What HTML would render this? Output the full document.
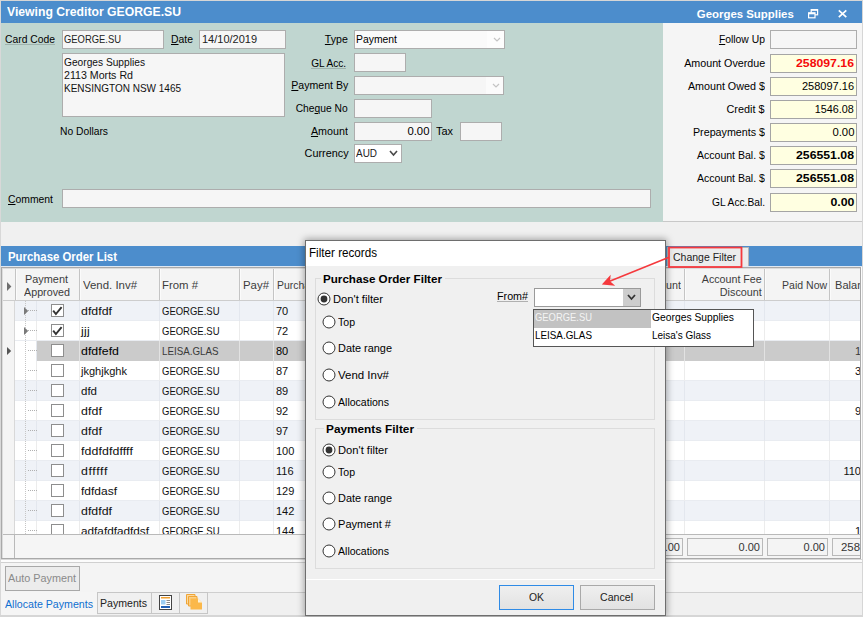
<!DOCTYPE html>
<html><head><meta charset="utf-8"><title>Viewing Creditor GEORGE.SU</title>
<style>
html,body{margin:0;padding:0;}
html{width:863px;height:617px;overflow:hidden;}
body{width:863px;height:617px;position:relative;overflow:hidden;background:#f0f0f0;font-family:"Liberation Sans", sans-serif;font-size:11px;}
div,span.t,svg{position:absolute;box-sizing:border-box;}
span.t{white-space:nowrap;}
u{text-decoration:underline;text-underline-offset:1px;}

.inp{background:#f6f6f6;border:1px solid #adadad;}
.yel{background:#ffffe1;border:1px solid #a5a5a5;}
.hc{background:#f3f3f3;border-right:1px solid #c3c3c3;}

</style></head><body>
<div style="left:0px;top:0px;width:863px;height:617px;background:#f0f0f0;"></div>
<div style="left:0px;top:0px;width:863px;height:1px;background:#d6d6d6;"></div>
<div style="left:0px;top:0px;width:1px;height:617px;background:#d8d8d8;"></div>
<div style="left:862px;top:0px;width:1px;height:617px;background:#d6d6d6;"></div>
<div style="left:1px;top:1px;width:861px;height:22px;background:#4c8dcc;"></div>
<span class="t" style="top:5.34px;font-size:12px;line-height:15px;color:#fff;font-weight:bold;left:7px;transform:scaleX(1.0167);transform-origin:0 50%;">Viewing Creditor GEORGE.SU</span>
<span class="t" style="top:6.77px;font-size:11.5px;line-height:14.5px;color:#fff;font-weight:bold;right:69.00px;transform:scaleX(0.9920);transform-origin:100% 50%;">Georges Supplies</span>
<svg style="left:807px;top:8px" width="12" height="12" viewBox="0 0 12 12"><rect x="4.2" y="1.6" width="6.4" height="5.2" fill="none" stroke="#fff" stroke-width="1.2"/><rect x="1.6" y="4.8" width="6.4" height="5" fill="#4c8dcc" stroke="#fff" stroke-width="1.2"/><rect x="1.6" y="4.8" width="6.4" height="1.5" fill="#fff"/><rect x="4.2" y="1.6" width="6.4" height="1.2" fill="#fff"/></svg>
<svg style="left:837px;top:9px" width="11" height="10" viewBox="0 0 11 10"><path d="M1.8 1.4 L9.3 8.2 M9.3 1.4 L1.8 8.2" stroke="#fff" stroke-width="1.7" fill="none"/></svg>
<div style="left:1px;top:23px;width:662px;height:199px;background:#c0d6d0;"></div>
<div style="left:663px;top:23px;width:199px;height:199px;background:#f5f5f5;"></div>
<div style="left:663px;top:221px;width:199px;height:1px;background:#c8c8c8;"></div>
<span class="t" style="top:32.19px;font-size:11px;line-height:14px;color:#000;left:5px;transform:scaleX(0.9398);transform-origin:0 50%;">Card Code</span>
<div style="left:5px;top:44px;width:50px;height:1px;background:#9fb2ad;"></div>
<div class="inp" style="left:62px;top:30px;width:102px;height:19px;"></div>
<span class="t" style="top:32.19px;font-size:11px;line-height:14px;color:#222;left:64px;transform:scaleX(0.8555);transform-origin:0 50%;">GEORGE.SU</span>
<span class="t" style="top:32.19px;font-size:11px;line-height:14px;color:#000;left:171px;transform:scaleX(0.9462);transform-origin:0 50%;"><u>D</u>ate</span>
<div class="inp" style="left:199px;top:30px;width:87px;height:19px;"></div>
<span class="t" style="top:32.19px;font-size:11px;line-height:14px;color:#222;left:202px;transform:scaleX(0.9989);transform-origin:0 50%;">14/10/2019</span>
<div class="inp" style="left:62px;top:53px;width:223px;height:64px;"></div>
<span class="t" style="top:55.19px;font-size:11px;line-height:14px;color:#111;left:64px;transform:scaleX(0.9262);transform-origin:0 50%;">Georges Supplies</span>
<span class="t" style="top:68.19px;font-size:11px;line-height:14px;color:#111;left:64px;transform:scaleX(0.9674);transform-origin:0 50%;">2113 Morts Rd</span>
<span class="t" style="top:81.19px;font-size:11px;line-height:14px;color:#111;left:64px;transform:scaleX(0.9085);transform-origin:0 50%;">KENSINGTON NSW 1465</span>
<span class="t" style="top:124.19px;font-size:11px;line-height:14px;color:#000;left:60px;transform:scaleX(0.9346);transform-origin:0 50%;">No Dollars</span>
<span class="t" style="top:192.19px;font-size:11px;line-height:14px;color:#000;left:8px;transform:scaleX(0.9433);transform-origin:0 50%;"><u>C</u>omment</span>
<div class="inp" style="left:62px;top:189px;width:589px;height:19px;"></div>
<span class="t" style="top:32.19px;font-size:11px;line-height:14px;color:#000;right:515.00px;transform:scaleX(0.9634);transform-origin:100% 50%;"><u>T</u>ype</span>
<div style="left:354px;top:30px;width:151px;height:19px;background:#fafafa;border:1px solid #adadad;"></div>
<div style="left:487px;top:31px;width:17px;height:17px;background:#fdfdfd;"></div>
<span class="t" style="top:32.19px;font-size:11px;line-height:14px;color:#000;left:355.5px;transform:scaleX(0.9442);transform-origin:0 50%;">Payment</span>
<span class="t" style="top:56.19px;font-size:11px;line-height:14px;color:#000;right:517.00px;transform:scaleX(0.9180);transform-origin:100% 50%;"><u>G</u>L Acc.</span>
<div style="left:311px;top:68px;width:35px;height:1px;background:#9fb2ad;"></div>
<div class="inp" style="left:354px;top:53px;width:52px;height:19px;"></div>
<span class="t" style="top:78.19px;font-size:11px;line-height:14px;color:#000;right:515.00px;transform:scaleX(0.9610);transform-origin:100% 50%;"><u>P</u>ayment By</span>
<div class="inp" style="left:354px;top:76px;width:150px;height:19px;"></div>
<div style="left:486px;top:77px;width:17px;height:17px;background:#fbfbfb;"></div>
<span class="t" style="top:101.19px;font-size:11px;line-height:14px;color:#000;right:515.00px;transform:scaleX(0.9340);transform-origin:100% 50%;">Che<u>q</u>ue No</span>
<div class="inp" style="left:354px;top:99px;width:78px;height:19px;"></div>
<span class="t" style="top:124.19px;font-size:11px;line-height:14px;color:#000;right:515.00px;transform:scaleX(0.9757);transform-origin:100% 50%;"><u>A</u>mount</span>
<div class="inp" style="left:354px;top:122px;width:78px;height:19px;"></div>
<span class="t" style="top:124.19px;font-size:11px;line-height:14px;color:#000;right:434.00px;transform:scaleX(1.0270);transform-origin:100% 50%;">0.00</span>
<span class="t" style="top:124.19px;font-size:11px;line-height:14px;color:#000;left:436px;transform:scaleX(0.9927);transform-origin:0 50%;">Tax</span>
<div class="inp" style="left:460px;top:122px;width:42px;height:19px;"></div>
<span class="t" style="top:146.19px;font-size:11px;line-height:14px;color:#000;right:514.00px;transform:scaleX(0.9860);transform-origin:100% 50%;">Currency</span>
<div style="left:354px;top:144px;width:48px;height:19px;background:#fff;border:1px solid #adadad;"></div>
<span class="t" style="top:146.19px;font-size:11px;line-height:14px;color:#222;left:356px;transform:scaleX(0.9038);transform-origin:0 50%;">AUD</span>
<svg style="left:493px;top:37px" width="8" height="6" viewBox="0 0 8 6"><path d="M1 1 L4.0 4 L7 1" stroke="#c4c4c4" stroke-width="1.2" fill="none"/></svg>
<svg style="left:492px;top:83px" width="8" height="6" viewBox="0 0 8 6"><path d="M1 1 L4.0 4 L7 1" stroke="#c4c4c4" stroke-width="1.2" fill="none"/></svg>
<svg style="left:389px;top:150px" width="9" height="7" viewBox="0 0 9 7"><path d="M1 1 L4.5 5 L8 1" stroke="#4a4a4a" stroke-width="1.6" fill="none"/></svg>
<span class="t" style="top:32.19px;font-size:11px;line-height:14px;color:#000;right:98.00px;transform:scaleX(0.9403);transform-origin:100% 50%;"><u>F</u>ollow Up</span>
<div class="inp" style="left:770px;top:30px;width:87px;height:19px;"></div>
<span class="t" style="top:56.19px;font-size:11px;line-height:14px;color:#000;right:98.00px;transform:scaleX(0.9741);transform-origin:100% 50%;">Amount Overdue</span>
<div class="yel" style="left:770px;top:54px;width:87px;height:19px;"></div>
<span class="t" style="top:56.19px;font-size:11px;line-height:14px;color:#f50a0a;font-weight:bold;right:9.00px;transform:scaleX(1.1154);transform-origin:100% 50%;">258097.16</span>
<span class="t" style="top:79.19px;font-size:11px;line-height:14px;color:#000;right:98.00px;transform:scaleX(0.9762);transform-origin:100% 50%;">Amount Owed $</span>
<div class="yel" style="left:770px;top:77px;width:87px;height:19px;"></div>
<span class="t" style="top:79.19px;font-size:11px;line-height:14px;color:#000;right:9.00px;transform:scaleX(1.0000);transform-origin:100% 50%;">258097.16</span>
<span class="t" style="top:102.19px;font-size:11px;line-height:14px;color:#000;right:98.00px;transform:scaleX(0.9862);transform-origin:100% 50%;">Credit $</span>
<div class="yel" style="left:770px;top:100px;width:87px;height:19px;"></div>
<span class="t" style="top:102.19px;font-size:11px;line-height:14px;color:#000;right:9.00px;transform:scaleX(0.9807);transform-origin:100% 50%;">1546.08</span>
<span class="t" style="top:125.19px;font-size:11px;line-height:14px;color:#000;right:98.00px;transform:scaleX(0.9732);transform-origin:100% 50%;">Prepayments $</span>
<div class="yel" style="left:770px;top:123px;width:87px;height:19px;"></div>
<span class="t" style="top:125.19px;font-size:11px;line-height:14px;color:#000;right:9.00px;transform:scaleX(1.0270);transform-origin:100% 50%;">0.00</span>
<span class="t" style="top:148.19px;font-size:11px;line-height:14px;color:#000;right:98.00px;transform:scaleX(0.9586);transform-origin:100% 50%;">Account Bal. $</span>
<div class="yel" style="left:770px;top:146px;width:87px;height:19px;"></div>
<span class="t" style="top:148.19px;font-size:11px;line-height:14px;color:#000;font-weight:bold;right:9.00px;transform:scaleX(1.1154);transform-origin:100% 50%;">256551.08</span>
<span class="t" style="top:171.19px;font-size:11px;line-height:14px;color:#000;right:98.00px;transform:scaleX(0.9586);transform-origin:100% 50%;">Account Bal. $</span>
<div class="yel" style="left:770px;top:169px;width:87px;height:19px;"></div>
<span class="t" style="top:171.19px;font-size:11px;line-height:14px;color:#000;font-weight:bold;right:9.00px;transform:scaleX(1.1154);transform-origin:100% 50%;">256551.08</span>
<span class="t" style="top:195.19px;font-size:11px;line-height:14px;color:#000;right:98.00px;transform:scaleX(0.9288);transform-origin:100% 50%;">GL Acc.Bal.</span>
<div class="yel" style="left:770px;top:193px;width:87px;height:19px;"></div>
<span class="t" style="top:195.19px;font-size:11px;line-height:14px;color:#000;font-weight:bold;letter-spacing:0.002px;right:9.00px;transform:scaleX(1.1200);transform-origin:100% 50%;">0.00</span>
<div style="left:1px;top:246px;width:861px;height:20px;background:#4c8dcc;"></div>
<span class="t" style="top:250.34px;font-size:12px;line-height:15px;color:#fff;font-weight:bold;left:8px;transform:scaleX(0.9501);transform-origin:0 50%;">Purchase Order List</span>
<div style="left:667px;top:247px;width:82px;height:20px;background:#ececec;border:1px solid #b5b5b5;"></div>
<span class="t" style="top:250.19px;font-size:11px;line-height:14px;color:#222;left:673px;transform:scaleX(0.9539);transform-origin:0 50%;">Change Filter</span>
<div style="left:1px;top:266px;width:861px;height:1px;background:#dfe8f2;"></div>
<div style="left:1px;top:267px;width:861px;height:295px;background:#fcfcfc;"></div>
<div style="left:1px;top:267px;width:860px;height:292px;background:#a9a9a9;"></div>
<div style="left:2px;top:268px;width:858px;height:290px;background:#dcdcdc;"></div>
<div style="left:3px;top:269px;width:857px;height:289px;background:#fff;"></div>
<div style="left:1px;top:559px;width:861px;height:1px;background:#d8d8d8;"></div>
<div style="left:3px;top:269px;width:857px;height:31px;background:#f4f4f4;"></div>
<div style="left:3px;top:300px;width:857px;height:1px;background:#cdcdcd;"></div>
<div style="left:15px;top:269px;width:1px;height:31px;background:#c4c4c4;"></div>
<div style="left:16px;top:269px;width:1px;height:31px;background:#fbfbfb;"></div>
<div style="left:79px;top:269px;width:1px;height:31px;background:#c4c4c4;"></div>
<div style="left:80px;top:269px;width:1px;height:31px;background:#fbfbfb;"></div>
<div style="left:159px;top:269px;width:1px;height:31px;background:#c4c4c4;"></div>
<div style="left:160px;top:269px;width:1px;height:31px;background:#fbfbfb;"></div>
<div style="left:239px;top:269px;width:1px;height:31px;background:#c4c4c4;"></div>
<div style="left:240px;top:269px;width:1px;height:31px;background:#fbfbfb;"></div>
<div style="left:273px;top:269px;width:1px;height:31px;background:#c4c4c4;"></div>
<div style="left:274px;top:269px;width:1px;height:31px;background:#fbfbfb;"></div>
<div style="left:347px;top:269px;width:1px;height:31px;background:#c4c4c4;"></div>
<div style="left:348px;top:269px;width:1px;height:31px;background:#fbfbfb;"></div>
<div style="left:419px;top:269px;width:1px;height:31px;background:#c4c4c4;"></div>
<div style="left:420px;top:269px;width:1px;height:31px;background:#fbfbfb;"></div>
<div style="left:499px;top:269px;width:1px;height:31px;background:#c4c4c4;"></div>
<div style="left:500px;top:269px;width:1px;height:31px;background:#fbfbfb;"></div>
<div style="left:559px;top:269px;width:1px;height:31px;background:#c4c4c4;"></div>
<div style="left:560px;top:269px;width:1px;height:31px;background:#fbfbfb;"></div>
<div style="left:619px;top:269px;width:1px;height:31px;background:#c4c4c4;"></div>
<div style="left:620px;top:269px;width:1px;height:31px;background:#fbfbfb;"></div>
<div style="left:684px;top:269px;width:1px;height:31px;background:#c4c4c4;"></div>
<div style="left:685px;top:269px;width:1px;height:31px;background:#fbfbfb;"></div>
<div style="left:764px;top:269px;width:1px;height:31px;background:#c4c4c4;"></div>
<div style="left:765px;top:269px;width:1px;height:31px;background:#fbfbfb;"></div>
<div style="left:829px;top:269px;width:1px;height:31px;background:#c4c4c4;"></div>
<div style="left:830px;top:269px;width:1px;height:31px;background:#fbfbfb;"></div>
<span class="t" style="top:272.19px;font-size:11px;line-height:14px;color:#3c3c3c;left:25px;transform:scaleX(0.9903);transform-origin:0 50%;">Payment</span>
<span class="t" style="top:285.19px;font-size:11px;line-height:14px;color:#3c3c3c;left:24px;transform:scaleX(0.9768);transform-origin:0 50%;">Approved</span>
<span class="t" style="top:278.19px;font-size:11px;line-height:14px;color:#3c3c3c;left:83px;transform:scaleX(1.0385);transform-origin:0 50%;">Vend. Inv#</span>
<span class="t" style="top:278.19px;font-size:11px;line-height:14px;color:#3c3c3c;left:161.5px;transform:scaleX(1.0332);transform-origin:0 50%;">From #</span>
<span class="t" style="top:278.19px;font-size:11px;line-height:14px;color:#3c3c3c;left:242.5px;transform:scaleX(1.0368);transform-origin:0 50%;">Pay#</span>
<span class="t" style="top:278.19px;font-size:11px;line-height:14px;color:#3c3c3c;left:276.5px;transform:scaleX(0.9466);transform-origin:0 50%;">Purchase</span>
<span class="t" style="top:278.19px;font-size:11px;line-height:14px;color:#3c3c3c;right:182.00px;transform:scaleX(0.9757);transform-origin:100% 50%;">Amount</span>
<span class="t" style="top:272.19px;font-size:11px;line-height:14px;color:#3c3c3c;right:101.00px;transform:scaleX(0.9714);transform-origin:100% 50%;">Account Fee</span>
<span class="t" style="top:285.19px;font-size:11px;line-height:14px;color:#3c3c3c;right:101.00px;transform:scaleX(0.9814);transform-origin:100% 50%;">Discount</span>
<span class="t" style="top:278.19px;font-size:11px;line-height:14px;color:#3c3c3c;right:36.00px;transform:scaleX(0.9559);transform-origin:100% 50%;">Paid Now</span>
<div style="left:830px;top:269px;width:30px;height:31px;overflow:hidden">
<span class="t" style="top:9.19px;font-size:11px;line-height:14px;color:#3c3c3c;left:5px;transform:scaleX(1.0059);transform-origin:0 50%;">Balance</span>
</div>
<div style="left:3px;top:301px;width:857px;height:233px;overflow:hidden">
<div style="left:12px;top:0px;width:845px;height:20px;background:#eff2f7;"></div>
<div style="left:12px;top:19px;width:845px;height:1px;background:#e9ecf1;"></div>
<div style="left:76px;top:0px;width:1px;height:20px;background:#e3e7ee;"></div>
<div style="left:156px;top:0px;width:1px;height:20px;background:#e3e7ee;"></div>
<div style="left:236px;top:0px;width:1px;height:20px;background:#e3e7ee;"></div>
<div style="left:270px;top:0px;width:1px;height:20px;background:#e3e7ee;"></div>
<div style="left:344px;top:0px;width:1px;height:20px;background:#e3e7ee;"></div>
<div style="left:416px;top:0px;width:1px;height:20px;background:#e3e7ee;"></div>
<div style="left:496px;top:0px;width:1px;height:20px;background:#e3e7ee;"></div>
<div style="left:556px;top:0px;width:1px;height:20px;background:#e3e7ee;"></div>
<div style="left:616px;top:0px;width:1px;height:20px;background:#e3e7ee;"></div>
<div style="left:681px;top:0px;width:1px;height:20px;background:#e3e7ee;"></div>
<div style="left:761px;top:0px;width:1px;height:20px;background:#e3e7ee;"></div>
<div style="left:826px;top:0px;width:1px;height:20px;background:#e3e7ee;"></div>
<div style="left:33px;top:0px;width:1px;height:20px;background:#e3e7ee;"></div>
<div style="left:0px;top:0px;width:11px;height:20px;background:#f4f4f4;"></div>
<div style="left:11px;top:0px;width:1px;height:20px;background:#d8d8d8;"></div>
<div style="left:48px;top:3px;width:13px;height:13px;background:#fff;border:1px solid #8e8e8e;"></div>
<svg style="left:49px;top:4px" width="11" height="11" viewBox="0 0 11 11"><path d="M1.2 5.6 L3.9 9 L9.6 2.2" stroke="#333" stroke-width="1.9" fill="none"/></svg>
<div style="left:22px;top:0px;width:1px;height:20px;background:repeating-linear-gradient(to bottom,#c6c6c6 0 1px,transparent 1px 2px);"></div>
<div style="left:25px;top:9px;width:9px;height:1px;background:repeating-linear-gradient(to right,#b0b0b0 0 1px,transparent 1px 2px);"></div>
<svg style="left:21px;top:6px" width="5" height="8" viewBox="0 0 5 8"><path d="M0 0 L4.2 4 L0 8 Z" fill="#7a7a7a"/></svg>
<span class="t" style="top:3.19px;font-size:11px;line-height:14px;color:#111;letter-spacing:0.025px;left:78px;transform:scaleX(1.1200);transform-origin:0 50%;">dfdfdf</span>
<span class="t" style="top:3.19px;font-size:11px;line-height:14px;color:#111;left:158.5px;transform:scaleX(0.8630);transform-origin:0 50%;">GEORGE.SU</span>
<span class="t" style="top:3.19px;font-size:11px;line-height:14px;color:#111;left:273px;">70</span>
<div style="left:12px;top:20px;width:845px;height:20px;background:#fff;"></div>
<div style="left:12px;top:39px;width:845px;height:1px;background:#e9ecf1;"></div>
<div style="left:76px;top:20px;width:1px;height:20px;background:#ececec;"></div>
<div style="left:156px;top:20px;width:1px;height:20px;background:#ececec;"></div>
<div style="left:236px;top:20px;width:1px;height:20px;background:#ececec;"></div>
<div style="left:270px;top:20px;width:1px;height:20px;background:#ececec;"></div>
<div style="left:344px;top:20px;width:1px;height:20px;background:#ececec;"></div>
<div style="left:416px;top:20px;width:1px;height:20px;background:#ececec;"></div>
<div style="left:496px;top:20px;width:1px;height:20px;background:#ececec;"></div>
<div style="left:556px;top:20px;width:1px;height:20px;background:#ececec;"></div>
<div style="left:616px;top:20px;width:1px;height:20px;background:#ececec;"></div>
<div style="left:681px;top:20px;width:1px;height:20px;background:#ececec;"></div>
<div style="left:761px;top:20px;width:1px;height:20px;background:#ececec;"></div>
<div style="left:826px;top:20px;width:1px;height:20px;background:#ececec;"></div>
<div style="left:33px;top:20px;width:1px;height:20px;background:#ececec;"></div>
<div style="left:0px;top:20px;width:11px;height:20px;background:#f4f4f4;"></div>
<div style="left:11px;top:20px;width:1px;height:20px;background:#d8d8d8;"></div>
<div style="left:48px;top:23px;width:13px;height:13px;background:#fff;border:1px solid #8e8e8e;"></div>
<svg style="left:49px;top:24px" width="11" height="11" viewBox="0 0 11 11"><path d="M1.2 5.6 L3.9 9 L9.6 2.2" stroke="#333" stroke-width="1.9" fill="none"/></svg>
<div style="left:22px;top:20px;width:1px;height:20px;background:repeating-linear-gradient(to bottom,#c6c6c6 0 1px,transparent 1px 2px);"></div>
<div style="left:25px;top:29px;width:9px;height:1px;background:repeating-linear-gradient(to right,#b0b0b0 0 1px,transparent 1px 2px);"></div>
<svg style="left:21px;top:26px" width="5" height="8" viewBox="0 0 5 8"><path d="M0 0 L4.2 4 L0 8 Z" fill="#7a7a7a"/></svg>
<span class="t" style="top:23.19px;font-size:11px;line-height:14px;color:#111;letter-spacing:0.231px;left:78px;transform:scaleX(1.1200);transform-origin:0 50%;">jjj</span>
<span class="t" style="top:23.19px;font-size:11px;line-height:14px;color:#111;left:158.5px;transform:scaleX(0.8630);transform-origin:0 50%;">GEORGE.SU</span>
<span class="t" style="top:23.19px;font-size:11px;line-height:14px;color:#111;left:273px;">72</span>
<div style="left:12px;top:40px;width:845px;height:20px;background:#fff;"></div>
<div style="left:34px;top:40px;width:823px;height:20px;background:#cbcbcb;"></div>
<div style="left:76px;top:40px;width:1px;height:20px;background:#e2e2e2;"></div>
<div style="left:156px;top:40px;width:1px;height:20px;background:#e2e2e2;"></div>
<div style="left:236px;top:40px;width:1px;height:20px;background:#e2e2e2;"></div>
<div style="left:270px;top:40px;width:1px;height:20px;background:#e2e2e2;"></div>
<div style="left:344px;top:40px;width:1px;height:20px;background:#e2e2e2;"></div>
<div style="left:416px;top:40px;width:1px;height:20px;background:#e2e2e2;"></div>
<div style="left:496px;top:40px;width:1px;height:20px;background:#e2e2e2;"></div>
<div style="left:556px;top:40px;width:1px;height:20px;background:#e2e2e2;"></div>
<div style="left:616px;top:40px;width:1px;height:20px;background:#e2e2e2;"></div>
<div style="left:681px;top:40px;width:1px;height:20px;background:#e2e2e2;"></div>
<div style="left:761px;top:40px;width:1px;height:20px;background:#e2e2e2;"></div>
<div style="left:826px;top:40px;width:1px;height:20px;background:#e2e2e2;"></div>
<div style="left:33px;top:40px;width:1px;height:20px;background:#e3e7ee;"></div>
<div style="left:0px;top:40px;width:11px;height:20px;background:#f4f4f4;"></div>
<div style="left:11px;top:40px;width:1px;height:20px;background:#d8d8d8;"></div>
<div style="left:48px;top:43px;width:13px;height:13px;background:#fff;border:1px solid #8e8e8e;"></div>
<div style="left:22px;top:40px;width:1px;height:20px;background:repeating-linear-gradient(to bottom,#c6c6c6 0 1px,transparent 1px 2px);"></div>
<div style="left:25px;top:49px;width:9px;height:1px;background:repeating-linear-gradient(to right,#b0b0b0 0 1px,transparent 1px 2px);"></div>
<span class="t" style="top:43.19px;font-size:11px;line-height:14px;color:#000;letter-spacing:0.041px;left:78px;transform:scaleX(1.1200);transform-origin:0 50%;">dfdfefd</span>
<span class="t" style="top:43.19px;font-size:11px;line-height:14px;color:#3a3a3a;left:158.5px;transform:scaleX(0.8885);transform-origin:0 50%;">LEISA.GLAS</span>
<span class="t" style="top:43.19px;font-size:11px;line-height:14px;color:#000;left:273px;">80</span>
<span class="t" style="top:43.19px;font-size:11px;line-height:14px;color:#3a3a3a;right:-1.00px;">1</span>
<svg style="left:4px;top:46px" width="5" height="8" viewBox="0 0 5 8"><path d="M0 0 L4.2 4 L0 8 Z" fill="#555"/></svg>
<div style="left:12px;top:60px;width:845px;height:20px;background:#fff;"></div>
<div style="left:12px;top:79px;width:845px;height:1px;background:#e9ecf1;"></div>
<div style="left:76px;top:60px;width:1px;height:20px;background:#ececec;"></div>
<div style="left:156px;top:60px;width:1px;height:20px;background:#ececec;"></div>
<div style="left:236px;top:60px;width:1px;height:20px;background:#ececec;"></div>
<div style="left:270px;top:60px;width:1px;height:20px;background:#ececec;"></div>
<div style="left:344px;top:60px;width:1px;height:20px;background:#ececec;"></div>
<div style="left:416px;top:60px;width:1px;height:20px;background:#ececec;"></div>
<div style="left:496px;top:60px;width:1px;height:20px;background:#ececec;"></div>
<div style="left:556px;top:60px;width:1px;height:20px;background:#ececec;"></div>
<div style="left:616px;top:60px;width:1px;height:20px;background:#ececec;"></div>
<div style="left:681px;top:60px;width:1px;height:20px;background:#ececec;"></div>
<div style="left:761px;top:60px;width:1px;height:20px;background:#ececec;"></div>
<div style="left:826px;top:60px;width:1px;height:20px;background:#ececec;"></div>
<div style="left:33px;top:60px;width:1px;height:20px;background:#ececec;"></div>
<div style="left:0px;top:60px;width:11px;height:20px;background:#f4f4f4;"></div>
<div style="left:11px;top:60px;width:1px;height:20px;background:#d8d8d8;"></div>
<div style="left:48px;top:63px;width:13px;height:13px;background:#fff;border:1px solid #8e8e8e;"></div>
<div style="left:22px;top:60px;width:1px;height:20px;background:repeating-linear-gradient(to bottom,#c6c6c6 0 1px,transparent 1px 2px);"></div>
<div style="left:25px;top:69px;width:9px;height:1px;background:repeating-linear-gradient(to right,#b0b0b0 0 1px,transparent 1px 2px);"></div>
<span class="t" style="top:63.19px;font-size:11px;line-height:14px;color:#111;left:78px;transform:scaleX(1.0031);transform-origin:0 50%;">jkghjkghk</span>
<span class="t" style="top:63.19px;font-size:11px;line-height:14px;color:#111;left:158.5px;transform:scaleX(0.8630);transform-origin:0 50%;">GEORGE.SU</span>
<span class="t" style="top:63.19px;font-size:11px;line-height:14px;color:#111;left:273px;">87</span>
<span class="t" style="top:63.19px;font-size:11px;line-height:14px;color:#111;right:-1.00px;">3</span>
<div style="left:12px;top:80px;width:845px;height:20px;background:#eff2f7;"></div>
<div style="left:12px;top:99px;width:845px;height:1px;background:#e9ecf1;"></div>
<div style="left:76px;top:80px;width:1px;height:20px;background:#e3e7ee;"></div>
<div style="left:156px;top:80px;width:1px;height:20px;background:#e3e7ee;"></div>
<div style="left:236px;top:80px;width:1px;height:20px;background:#e3e7ee;"></div>
<div style="left:270px;top:80px;width:1px;height:20px;background:#e3e7ee;"></div>
<div style="left:344px;top:80px;width:1px;height:20px;background:#e3e7ee;"></div>
<div style="left:416px;top:80px;width:1px;height:20px;background:#e3e7ee;"></div>
<div style="left:496px;top:80px;width:1px;height:20px;background:#e3e7ee;"></div>
<div style="left:556px;top:80px;width:1px;height:20px;background:#e3e7ee;"></div>
<div style="left:616px;top:80px;width:1px;height:20px;background:#e3e7ee;"></div>
<div style="left:681px;top:80px;width:1px;height:20px;background:#e3e7ee;"></div>
<div style="left:761px;top:80px;width:1px;height:20px;background:#e3e7ee;"></div>
<div style="left:826px;top:80px;width:1px;height:20px;background:#e3e7ee;"></div>
<div style="left:33px;top:80px;width:1px;height:20px;background:#e3e7ee;"></div>
<div style="left:0px;top:80px;width:11px;height:20px;background:#f4f4f4;"></div>
<div style="left:11px;top:80px;width:1px;height:20px;background:#d8d8d8;"></div>
<div style="left:48px;top:83px;width:13px;height:13px;background:#fff;border:1px solid #8e8e8e;"></div>
<div style="left:22px;top:80px;width:1px;height:20px;background:repeating-linear-gradient(to bottom,#c6c6c6 0 1px,transparent 1px 2px);"></div>
<div style="left:25px;top:89px;width:9px;height:1px;background:repeating-linear-gradient(to right,#b0b0b0 0 1px,transparent 1px 2px);"></div>
<span class="t" style="top:83.19px;font-size:11px;line-height:14px;color:#111;left:78px;transform:scaleX(1.0460);transform-origin:0 50%;">dfd</span>
<span class="t" style="top:83.19px;font-size:11px;line-height:14px;color:#111;left:158.5px;transform:scaleX(0.8630);transform-origin:0 50%;">GEORGE.SU</span>
<span class="t" style="top:83.19px;font-size:11px;line-height:14px;color:#111;left:273px;">89</span>
<div style="left:12px;top:100px;width:845px;height:20px;background:#fff;"></div>
<div style="left:12px;top:119px;width:845px;height:1px;background:#e9ecf1;"></div>
<div style="left:76px;top:100px;width:1px;height:20px;background:#ececec;"></div>
<div style="left:156px;top:100px;width:1px;height:20px;background:#ececec;"></div>
<div style="left:236px;top:100px;width:1px;height:20px;background:#ececec;"></div>
<div style="left:270px;top:100px;width:1px;height:20px;background:#ececec;"></div>
<div style="left:344px;top:100px;width:1px;height:20px;background:#ececec;"></div>
<div style="left:416px;top:100px;width:1px;height:20px;background:#ececec;"></div>
<div style="left:496px;top:100px;width:1px;height:20px;background:#ececec;"></div>
<div style="left:556px;top:100px;width:1px;height:20px;background:#ececec;"></div>
<div style="left:616px;top:100px;width:1px;height:20px;background:#ececec;"></div>
<div style="left:681px;top:100px;width:1px;height:20px;background:#ececec;"></div>
<div style="left:761px;top:100px;width:1px;height:20px;background:#ececec;"></div>
<div style="left:826px;top:100px;width:1px;height:20px;background:#ececec;"></div>
<div style="left:33px;top:100px;width:1px;height:20px;background:#ececec;"></div>
<div style="left:0px;top:100px;width:11px;height:20px;background:#f4f4f4;"></div>
<div style="left:11px;top:100px;width:1px;height:20px;background:#d8d8d8;"></div>
<div style="left:48px;top:103px;width:13px;height:13px;background:#fff;border:1px solid #8e8e8e;"></div>
<div style="left:22px;top:100px;width:1px;height:20px;background:repeating-linear-gradient(to bottom,#c6c6c6 0 1px,transparent 1px 2px);"></div>
<div style="left:25px;top:109px;width:9px;height:1px;background:repeating-linear-gradient(to right,#b0b0b0 0 1px,transparent 1px 2px);"></div>
<span class="t" style="top:103.19px;font-size:11px;line-height:14px;color:#111;letter-spacing:0.098px;left:78px;transform:scaleX(1.1200);transform-origin:0 50%;">dfdf</span>
<span class="t" style="top:103.19px;font-size:11px;line-height:14px;color:#111;left:158.5px;transform:scaleX(0.8630);transform-origin:0 50%;">GEORGE.SU</span>
<span class="t" style="top:103.19px;font-size:11px;line-height:14px;color:#111;left:273px;">92</span>
<span class="t" style="top:103.19px;font-size:11px;line-height:14px;color:#111;right:-1.00px;">9</span>
<div style="left:12px;top:120px;width:845px;height:20px;background:#eff2f7;"></div>
<div style="left:12px;top:139px;width:845px;height:1px;background:#e9ecf1;"></div>
<div style="left:76px;top:120px;width:1px;height:20px;background:#e3e7ee;"></div>
<div style="left:156px;top:120px;width:1px;height:20px;background:#e3e7ee;"></div>
<div style="left:236px;top:120px;width:1px;height:20px;background:#e3e7ee;"></div>
<div style="left:270px;top:120px;width:1px;height:20px;background:#e3e7ee;"></div>
<div style="left:344px;top:120px;width:1px;height:20px;background:#e3e7ee;"></div>
<div style="left:416px;top:120px;width:1px;height:20px;background:#e3e7ee;"></div>
<div style="left:496px;top:120px;width:1px;height:20px;background:#e3e7ee;"></div>
<div style="left:556px;top:120px;width:1px;height:20px;background:#e3e7ee;"></div>
<div style="left:616px;top:120px;width:1px;height:20px;background:#e3e7ee;"></div>
<div style="left:681px;top:120px;width:1px;height:20px;background:#e3e7ee;"></div>
<div style="left:761px;top:120px;width:1px;height:20px;background:#e3e7ee;"></div>
<div style="left:826px;top:120px;width:1px;height:20px;background:#e3e7ee;"></div>
<div style="left:33px;top:120px;width:1px;height:20px;background:#e3e7ee;"></div>
<div style="left:0px;top:120px;width:11px;height:20px;background:#f4f4f4;"></div>
<div style="left:11px;top:120px;width:1px;height:20px;background:#d8d8d8;"></div>
<div style="left:48px;top:123px;width:13px;height:13px;background:#fff;border:1px solid #8e8e8e;"></div>
<div style="left:22px;top:120px;width:1px;height:20px;background:repeating-linear-gradient(to bottom,#c6c6c6 0 1px,transparent 1px 2px);"></div>
<div style="left:25px;top:129px;width:9px;height:1px;background:repeating-linear-gradient(to right,#b0b0b0 0 1px,transparent 1px 2px);"></div>
<span class="t" style="top:123.19px;font-size:11px;line-height:14px;color:#111;letter-spacing:0.098px;left:78px;transform:scaleX(1.1200);transform-origin:0 50%;">dfdf</span>
<span class="t" style="top:123.19px;font-size:11px;line-height:14px;color:#111;left:158.5px;transform:scaleX(0.8630);transform-origin:0 50%;">GEORGE.SU</span>
<span class="t" style="top:123.19px;font-size:11px;line-height:14px;color:#111;left:273px;">97</span>
<div style="left:12px;top:140px;width:845px;height:20px;background:#fff;"></div>
<div style="left:12px;top:159px;width:845px;height:1px;background:#e9ecf1;"></div>
<div style="left:76px;top:140px;width:1px;height:20px;background:#ececec;"></div>
<div style="left:156px;top:140px;width:1px;height:20px;background:#ececec;"></div>
<div style="left:236px;top:140px;width:1px;height:20px;background:#ececec;"></div>
<div style="left:270px;top:140px;width:1px;height:20px;background:#ececec;"></div>
<div style="left:344px;top:140px;width:1px;height:20px;background:#ececec;"></div>
<div style="left:416px;top:140px;width:1px;height:20px;background:#ececec;"></div>
<div style="left:496px;top:140px;width:1px;height:20px;background:#ececec;"></div>
<div style="left:556px;top:140px;width:1px;height:20px;background:#ececec;"></div>
<div style="left:616px;top:140px;width:1px;height:20px;background:#ececec;"></div>
<div style="left:681px;top:140px;width:1px;height:20px;background:#ececec;"></div>
<div style="left:761px;top:140px;width:1px;height:20px;background:#ececec;"></div>
<div style="left:826px;top:140px;width:1px;height:20px;background:#ececec;"></div>
<div style="left:33px;top:140px;width:1px;height:20px;background:#ececec;"></div>
<div style="left:0px;top:140px;width:11px;height:20px;background:#f4f4f4;"></div>
<div style="left:11px;top:140px;width:1px;height:20px;background:#d8d8d8;"></div>
<div style="left:48px;top:143px;width:13px;height:13px;background:#fff;border:1px solid #8e8e8e;"></div>
<div style="left:22px;top:140px;width:1px;height:20px;background:repeating-linear-gradient(to bottom,#c6c6c6 0 1px,transparent 1px 2px);"></div>
<div style="left:25px;top:149px;width:9px;height:1px;background:repeating-linear-gradient(to right,#b0b0b0 0 1px,transparent 1px 2px);"></div>
<span class="t" style="top:143.19px;font-size:11px;line-height:14px;color:#111;letter-spacing:0.104px;left:78px;transform:scaleX(1.1200);transform-origin:0 50%;">fddfdfdffff</span>
<span class="t" style="top:143.19px;font-size:11px;line-height:14px;color:#111;left:158.5px;transform:scaleX(0.8630);transform-origin:0 50%;">GEORGE.SU</span>
<span class="t" style="top:143.19px;font-size:11px;line-height:14px;color:#111;left:273px;">100</span>
<div style="left:12px;top:160px;width:845px;height:20px;background:#eff2f7;"></div>
<div style="left:12px;top:179px;width:845px;height:1px;background:#e9ecf1;"></div>
<div style="left:76px;top:160px;width:1px;height:20px;background:#e3e7ee;"></div>
<div style="left:156px;top:160px;width:1px;height:20px;background:#e3e7ee;"></div>
<div style="left:236px;top:160px;width:1px;height:20px;background:#e3e7ee;"></div>
<div style="left:270px;top:160px;width:1px;height:20px;background:#e3e7ee;"></div>
<div style="left:344px;top:160px;width:1px;height:20px;background:#e3e7ee;"></div>
<div style="left:416px;top:160px;width:1px;height:20px;background:#e3e7ee;"></div>
<div style="left:496px;top:160px;width:1px;height:20px;background:#e3e7ee;"></div>
<div style="left:556px;top:160px;width:1px;height:20px;background:#e3e7ee;"></div>
<div style="left:616px;top:160px;width:1px;height:20px;background:#e3e7ee;"></div>
<div style="left:681px;top:160px;width:1px;height:20px;background:#e3e7ee;"></div>
<div style="left:761px;top:160px;width:1px;height:20px;background:#e3e7ee;"></div>
<div style="left:826px;top:160px;width:1px;height:20px;background:#e3e7ee;"></div>
<div style="left:33px;top:160px;width:1px;height:20px;background:#e3e7ee;"></div>
<div style="left:0px;top:160px;width:11px;height:20px;background:#f4f4f4;"></div>
<div style="left:11px;top:160px;width:1px;height:20px;background:#d8d8d8;"></div>
<div style="left:48px;top:163px;width:13px;height:13px;background:#fff;border:1px solid #8e8e8e;"></div>
<div style="left:22px;top:160px;width:1px;height:20px;background:repeating-linear-gradient(to bottom,#c6c6c6 0 1px,transparent 1px 2px);"></div>
<div style="left:25px;top:169px;width:9px;height:1px;background:repeating-linear-gradient(to right,#b0b0b0 0 1px,transparent 1px 2px);"></div>
<span class="t" style="top:163.19px;font-size:11px;line-height:14px;color:#111;letter-spacing:0.583px;left:78px;transform:scaleX(1.1200);transform-origin:0 50%;">dfffff</span>
<span class="t" style="top:163.19px;font-size:11px;line-height:14px;color:#111;left:158.5px;transform:scaleX(0.8630);transform-origin:0 50%;">GEORGE.SU</span>
<span class="t" style="top:163.19px;font-size:11px;line-height:14px;color:#111;left:273px;">116</span>
<span class="t" style="top:163.19px;font-size:11px;line-height:14px;color:#111;right:-1.00px;">110</span>
<div style="left:12px;top:180px;width:845px;height:20px;background:#fff;"></div>
<div style="left:12px;top:199px;width:845px;height:1px;background:#e9ecf1;"></div>
<div style="left:76px;top:180px;width:1px;height:20px;background:#ececec;"></div>
<div style="left:156px;top:180px;width:1px;height:20px;background:#ececec;"></div>
<div style="left:236px;top:180px;width:1px;height:20px;background:#ececec;"></div>
<div style="left:270px;top:180px;width:1px;height:20px;background:#ececec;"></div>
<div style="left:344px;top:180px;width:1px;height:20px;background:#ececec;"></div>
<div style="left:416px;top:180px;width:1px;height:20px;background:#ececec;"></div>
<div style="left:496px;top:180px;width:1px;height:20px;background:#ececec;"></div>
<div style="left:556px;top:180px;width:1px;height:20px;background:#ececec;"></div>
<div style="left:616px;top:180px;width:1px;height:20px;background:#ececec;"></div>
<div style="left:681px;top:180px;width:1px;height:20px;background:#ececec;"></div>
<div style="left:761px;top:180px;width:1px;height:20px;background:#ececec;"></div>
<div style="left:826px;top:180px;width:1px;height:20px;background:#ececec;"></div>
<div style="left:33px;top:180px;width:1px;height:20px;background:#ececec;"></div>
<div style="left:0px;top:180px;width:11px;height:20px;background:#f4f4f4;"></div>
<div style="left:11px;top:180px;width:1px;height:20px;background:#d8d8d8;"></div>
<div style="left:48px;top:183px;width:13px;height:13px;background:#fff;border:1px solid #8e8e8e;"></div>
<div style="left:22px;top:180px;width:1px;height:20px;background:repeating-linear-gradient(to bottom,#c6c6c6 0 1px,transparent 1px 2px);"></div>
<div style="left:25px;top:189px;width:9px;height:1px;background:repeating-linear-gradient(to right,#b0b0b0 0 1px,transparent 1px 2px);"></div>
<span class="t" style="top:183.19px;font-size:11px;line-height:14px;color:#111;left:78px;transform:scaleX(1.0899);transform-origin:0 50%;">fdfdasf</span>
<span class="t" style="top:183.19px;font-size:11px;line-height:14px;color:#111;left:158.5px;transform:scaleX(0.8630);transform-origin:0 50%;">GEORGE.SU</span>
<span class="t" style="top:183.19px;font-size:11px;line-height:14px;color:#111;left:273px;">129</span>
<div style="left:12px;top:200px;width:845px;height:20px;background:#eff2f7;"></div>
<div style="left:12px;top:219px;width:845px;height:1px;background:#e9ecf1;"></div>
<div style="left:76px;top:200px;width:1px;height:20px;background:#e3e7ee;"></div>
<div style="left:156px;top:200px;width:1px;height:20px;background:#e3e7ee;"></div>
<div style="left:236px;top:200px;width:1px;height:20px;background:#e3e7ee;"></div>
<div style="left:270px;top:200px;width:1px;height:20px;background:#e3e7ee;"></div>
<div style="left:344px;top:200px;width:1px;height:20px;background:#e3e7ee;"></div>
<div style="left:416px;top:200px;width:1px;height:20px;background:#e3e7ee;"></div>
<div style="left:496px;top:200px;width:1px;height:20px;background:#e3e7ee;"></div>
<div style="left:556px;top:200px;width:1px;height:20px;background:#e3e7ee;"></div>
<div style="left:616px;top:200px;width:1px;height:20px;background:#e3e7ee;"></div>
<div style="left:681px;top:200px;width:1px;height:20px;background:#e3e7ee;"></div>
<div style="left:761px;top:200px;width:1px;height:20px;background:#e3e7ee;"></div>
<div style="left:826px;top:200px;width:1px;height:20px;background:#e3e7ee;"></div>
<div style="left:33px;top:200px;width:1px;height:20px;background:#e3e7ee;"></div>
<div style="left:0px;top:200px;width:11px;height:20px;background:#f4f4f4;"></div>
<div style="left:11px;top:200px;width:1px;height:20px;background:#d8d8d8;"></div>
<div style="left:48px;top:203px;width:13px;height:13px;background:#fff;border:1px solid #8e8e8e;"></div>
<div style="left:22px;top:200px;width:1px;height:20px;background:repeating-linear-gradient(to bottom,#c6c6c6 0 1px,transparent 1px 2px);"></div>
<div style="left:25px;top:209px;width:9px;height:1px;background:repeating-linear-gradient(to right,#b0b0b0 0 1px,transparent 1px 2px);"></div>
<span class="t" style="top:203.19px;font-size:11px;line-height:14px;color:#111;letter-spacing:0.025px;left:78px;transform:scaleX(1.1200);transform-origin:0 50%;">dfdfdf</span>
<span class="t" style="top:203.19px;font-size:11px;line-height:14px;color:#111;left:158.5px;transform:scaleX(0.8630);transform-origin:0 50%;">GEORGE.SU</span>
<span class="t" style="top:203.19px;font-size:11px;line-height:14px;color:#111;left:273px;">142</span>
<div style="left:12px;top:220px;width:845px;height:20px;background:#fff;"></div>
<div style="left:12px;top:239px;width:845px;height:1px;background:#e9ecf1;"></div>
<div style="left:76px;top:220px;width:1px;height:20px;background:#ececec;"></div>
<div style="left:156px;top:220px;width:1px;height:20px;background:#ececec;"></div>
<div style="left:236px;top:220px;width:1px;height:20px;background:#ececec;"></div>
<div style="left:270px;top:220px;width:1px;height:20px;background:#ececec;"></div>
<div style="left:344px;top:220px;width:1px;height:20px;background:#ececec;"></div>
<div style="left:416px;top:220px;width:1px;height:20px;background:#ececec;"></div>
<div style="left:496px;top:220px;width:1px;height:20px;background:#ececec;"></div>
<div style="left:556px;top:220px;width:1px;height:20px;background:#ececec;"></div>
<div style="left:616px;top:220px;width:1px;height:20px;background:#ececec;"></div>
<div style="left:681px;top:220px;width:1px;height:20px;background:#ececec;"></div>
<div style="left:761px;top:220px;width:1px;height:20px;background:#ececec;"></div>
<div style="left:826px;top:220px;width:1px;height:20px;background:#ececec;"></div>
<div style="left:33px;top:220px;width:1px;height:20px;background:#ececec;"></div>
<div style="left:0px;top:220px;width:11px;height:20px;background:#f4f4f4;"></div>
<div style="left:11px;top:220px;width:1px;height:20px;background:#d8d8d8;"></div>
<div style="left:48px;top:223px;width:13px;height:13px;background:#fff;border:1px solid #8e8e8e;"></div>
<div style="left:22px;top:220px;width:1px;height:20px;background:repeating-linear-gradient(to bottom,#c6c6c6 0 1px,transparent 1px 2px);"></div>
<div style="left:25px;top:229px;width:9px;height:1px;background:repeating-linear-gradient(to right,#b0b0b0 0 1px,transparent 1px 2px);"></div>
<span class="t" style="top:223.19px;font-size:11px;line-height:14px;color:#111;left:78px;transform:scaleX(1.0690);transform-origin:0 50%;">adfafdfadfdsf</span>
<span class="t" style="top:223.19px;font-size:11px;line-height:14px;color:#111;left:158.5px;transform:scaleX(0.8630);transform-origin:0 50%;">GEORGE.SU</span>
<span class="t" style="top:223.19px;font-size:11px;line-height:14px;color:#111;left:273px;">144</span>
<span class="t" style="top:223.19px;font-size:11px;line-height:14px;color:#111;right:-1.00px;">1</span>
</div>
<svg style="left:7px;top:282px" width="5" height="9" viewBox="0 0 5 9"><path d="M0 0 L4.4 4.5 L0 9 Z" fill="#6e6e6e"/></svg>
<div style="left:3px;top:534px;width:857px;height:24px;background:#f5f5f5;"></div>
<div style="left:3px;top:534px;width:857px;height:1px;background:#b9b9b9;"></div>
<div style="left:14px;top:535px;width:1px;height:23px;background:#b9b9b9;"></div>
<div style="left:620px;top:538px;width:63px;height:18px;background:#f4f4f4;border:1px solid #b9b9b9;"></div>
<span class="t" style="top:540.19px;font-size:11px;line-height:14px;color:#333;right:183.00px;">0.00</span>
<div style="left:687px;top:538px;width:76px;height:18px;background:#f4f4f4;border:1px solid #b9b9b9;"></div>
<span class="t" style="top:540.19px;font-size:11px;line-height:14px;color:#333;right:103.00px;">0.00</span>
<div style="left:767px;top:538px;width:61px;height:18px;background:#f4f4f4;border:1px solid #b9b9b9;"></div>
<span class="t" style="top:540.19px;font-size:11px;line-height:14px;color:#333;right:38.00px;">0.00</span>
<div style="left:832px;top:538px;width:28px;height:18px;background:#f4f4f4;border:1px solid #b9b9b9;border-right:none;"></div>
<span class="t" style="top:540.19px;font-size:11px;line-height:14px;color:#333;left:841px;transform:scaleX(1.0349);transform-origin:0 50%;">258</span>
<div style="left:1px;top:562px;width:861px;height:1px;background:#d0d0d0;"></div>
<div style="left:1px;top:563px;width:861px;height:29px;background:#f4f4f4;"></div>
<div style="left:1px;top:592px;width:861px;height:1px;background:#cfcfcf;"></div>
<div style="left:1px;top:593px;width:861px;height:22px;background:#f0f0f0;"></div>
<div style="left:0px;top:615px;width:863px;height:2px;background:#d6d6d6;"></div>
<div style="left:5px;top:566px;width:75px;height:25px;background:#ececec;border:1px solid #a8a8a8;"></div>
<span class="t" style="top:571.19px;font-size:11px;line-height:14px;color:#8a8a8a;left:8px;transform:scaleX(0.9842);transform-origin:0 50%;">Auto Payment</span>
<div style="left:1px;top:592px;width:96px;height:23px;background:#f5f5f5;"></div>
<span class="t" style="top:597.19px;font-size:11px;line-height:14px;color:#0f6fd0;left:5px;transform:scaleX(0.9659);transform-origin:0 50%;">Allocate Payments</span>
<div style="left:97px;top:592px;width:55px;height:22px;background:#f0f0f0;border:1px solid #c6c6c6;"></div>
<span class="t" style="top:596.19px;font-size:11px;line-height:14px;color:#222;left:100px;transform:scaleX(0.9607);transform-origin:0 50%;">Payments</span>
<div style="left:151px;top:592px;width:29px;height:22px;background:#f0f0f0;border:1px solid #c6c6c6;"></div>
<div style="left:179px;top:592px;width:29px;height:22px;background:#f0f0f0;border:1px solid #c6c6c6;"></div>
<svg style="left:159px;top:595px" width="13" height="15" viewBox="0 0 13 15"><rect x="0.5" y="0.5" width="12" height="14" fill="#fff" stroke="#444"/><rect x="2" y="2" width="9" height="1.5" fill="#f0a030"/><rect x="2" y="5" width="4.5" height="4.5" fill="#9ccdf2"/><rect x="7.5" y="5" width="3.5" height="1" fill="#888"/><rect x="7.5" y="7" width="3.5" height="1" fill="#888"/><rect x="7.5" y="9" width="3.5" height="1" fill="#888"/><rect x="2" y="11" width="9" height="2" fill="#1f5fb4"/></svg>
<svg style="left:186px;top:594px" width="17" height="17" viewBox="0 0 17 17"><path d="M0.5 0.5 H9 V10 H0.5 Z" fill="#fbd9a0" stroke="#f0a535"/><path d="M2.5 2.5 H11 V12 H2.5 Z" fill="#fbcf85" stroke="#f0a535"/><path d="M4.5 4.5 H12 L16 8.5 V15.5 H4.5 Z" fill="#fbb84a"/><path d="M12 4.5 V8.5 H16 Z" fill="#fff3d8"/></svg>
<div style="left:305px;top:240px;width:361px;height:376px;background:#f0f0f0;border:1px solid #6e6e6e;box-shadow:0 0 7px 1px rgba(0,0,0,0.35);"></div>
<div style="left:306px;top:241px;width:359px;height:25px;background:#fff;"></div>
<span class="t" style="top:246.34px;font-size:12px;line-height:15px;color:#000;left:309px;transform:scaleX(0.9712);transform-origin:0 50%;">Filter records</span>
<div style="left:315px;top:278px;width:340px;height:142px;border:1px solid #dcdcdc;"></div>
<div style="left:321px;top:272px;width:124px;height:14px;background:#f0f0f0;"></div>
<span class="t" style="top:271.77px;font-size:11.5px;line-height:14.5px;color:#000;font-weight:bold;left:323px;transform:scaleX(1.0118);transform-origin:0 50%;">Purchase Order Filter</span>
<svg style="left:317px;top:292px" width="14" height="14" viewBox="0 0 14 14"><circle cx="7" cy="7" r="6" fill="#fff" stroke="#333" stroke-width="1"/><circle cx="7" cy="7" r="3.4" fill="#333"/></svg>
<span class="t" style="top:292.19px;font-size:11px;line-height:14px;color:#000;left:333px;transform:scaleX(1.0165);transform-origin:0 50%;">Don&#x27;t filter</span>
<svg style="left:322px;top:315px" width="14" height="14" viewBox="0 0 14 14"><circle cx="7" cy="7" r="6" fill="#fff" stroke="#333" stroke-width="1"/></svg>
<span class="t" style="top:315.19px;font-size:11px;line-height:14px;color:#000;left:338px;transform:scaleX(0.9577);transform-origin:0 50%;">Top</span>
<svg style="left:322px;top:341px" width="14" height="14" viewBox="0 0 14 14"><circle cx="7" cy="7" r="6" fill="#fff" stroke="#333" stroke-width="1"/></svg>
<span class="t" style="top:341.19px;font-size:11px;line-height:14px;color:#000;left:338px;transform:scaleX(0.9920);transform-origin:0 50%;">Date range</span>
<svg style="left:322px;top:368px" width="14" height="14" viewBox="0 0 14 14"><circle cx="7" cy="7" r="6" fill="#fff" stroke="#333" stroke-width="1"/></svg>
<span class="t" style="top:368.19px;font-size:11px;line-height:14px;color:#000;left:338px;transform:scaleX(1.0421);transform-origin:0 50%;">Vend Inv#</span>
<svg style="left:322px;top:395px" width="14" height="14" viewBox="0 0 14 14"><circle cx="7" cy="7" r="6" fill="#fff" stroke="#333" stroke-width="1"/></svg>
<span class="t" style="top:395.19px;font-size:11px;line-height:14px;color:#000;left:338px;transform:scaleX(0.9586);transform-origin:0 50%;">Allocations</span>
<span class="t" style="top:289.19px;font-size:11px;line-height:14px;color:#000;left:497px;transform:scaleX(0.9749);transform-origin:0 50%;"><u>F</u>rom#</span>
<div style="left:497px;top:301px;width:31px;height:1px;background:#b0b0b0;"></div>
<div style="left:534px;top:288px;width:107px;height:19px;background:#fff;border:1px solid #9a9a9a;"></div>
<div style="left:623px;top:289px;width:17px;height:17px;background:#cdcdcd;"></div>
<svg style="left:627px;top:294px" width="9" height="7" viewBox="0 0 9 7"><path d="M1 1 L4.5 5 L8 1" stroke="#333" stroke-width="1.8" fill="none"/></svg>
<div style="left:315px;top:428px;width:340px;height:141px;border:1px solid #dcdcdc;"></div>
<div style="left:324px;top:421px;width:93px;height:14px;background:#f0f0f0;"></div>
<span class="t" style="top:421.77px;font-size:11.5px;line-height:14.5px;color:#000;font-weight:bold;left:326px;transform:scaleX(1.0274);transform-origin:0 50%;">Payments Filter</span>
<svg style="left:322px;top:443px" width="14" height="14" viewBox="0 0 14 14"><circle cx="7" cy="7" r="6" fill="#fff" stroke="#333" stroke-width="1"/><circle cx="7" cy="7" r="3.4" fill="#333"/></svg>
<span class="t" style="top:443.19px;font-size:11px;line-height:14px;color:#000;left:338px;transform:scaleX(1.0165);transform-origin:0 50%;">Don&#x27;t filter</span>
<svg style="left:322px;top:465px" width="14" height="14" viewBox="0 0 14 14"><circle cx="7" cy="7" r="6" fill="#fff" stroke="#333" stroke-width="1"/></svg>
<span class="t" style="top:465.19px;font-size:11px;line-height:14px;color:#000;left:338px;transform:scaleX(0.9577);transform-origin:0 50%;">Top</span>
<svg style="left:322px;top:491px" width="14" height="14" viewBox="0 0 14 14"><circle cx="7" cy="7" r="6" fill="#fff" stroke="#333" stroke-width="1"/></svg>
<span class="t" style="top:491.19px;font-size:11px;line-height:14px;color:#000;left:338px;transform:scaleX(0.9920);transform-origin:0 50%;">Date range</span>
<svg style="left:322px;top:517px" width="14" height="14" viewBox="0 0 14 14"><circle cx="7" cy="7" r="6" fill="#fff" stroke="#333" stroke-width="1"/></svg>
<span class="t" style="top:517.19px;font-size:11px;line-height:14px;color:#000;left:338px;transform:scaleX(1.0077);transform-origin:0 50%;">Payment #</span>
<svg style="left:322px;top:544px" width="14" height="14" viewBox="0 0 14 14"><circle cx="7" cy="7" r="6" fill="#fff" stroke="#333" stroke-width="1"/></svg>
<span class="t" style="top:544.19px;font-size:11px;line-height:14px;color:#000;left:338px;transform:scaleX(0.9586);transform-origin:0 50%;">Allocations</span>
<div style="left:306px;top:579px;width:359px;height:1px;background:#fff;"></div>
<div style="left:499px;top:585px;width:75px;height:25px;border:1px solid #2f8be6;background:linear-gradient(#efefef,#e2e2e2);"></div>
<span class="t" style="top:590.19px;font-size:11px;line-height:14px;color:#222;left:529px;transform:scaleX(0.9430);transform-origin:0 50%;">OK</span>
<div style="left:580px;top:585px;width:75px;height:25px;border:1px solid #a9a9a9;background:linear-gradient(#efefef,#e2e2e2);"></div>
<span class="t" style="top:590.19px;font-size:11px;line-height:14px;color:#222;left:600px;transform:scaleX(0.9635);transform-origin:0 50%;">Cancel</span>
<div style="left:533px;top:309px;width:221px;height:38px;background:#fff;border:1px solid #555;"></div>
<div style="left:534px;top:310px;width:117px;height:18px;background:#c2c2c2;"></div>
<span class="t" style="top:310.19px;font-size:11px;line-height:14px;color:#f4f4f4;left:535px;transform:scaleX(0.8555);transform-origin:0 50%;">GEORGE.SU</span>
<span class="t" style="top:310.19px;font-size:11px;line-height:14px;color:#000;left:652px;transform:scaleX(0.9376);transform-origin:0 50%;">Georges Supplies</span>
<span class="t" style="top:328.19px;font-size:11px;line-height:14px;color:#000;left:535px;transform:scaleX(0.8963);transform-origin:0 50%;">LEISA.GLAS</span>
<span class="t" style="top:328.19px;font-size:11px;line-height:14px;color:#000;left:652px;transform:scaleX(0.9066);transform-origin:0 50%;">Leisa&#x27;s Glass</span>
<svg style="left:590px;top:240px" width="160" height="60" viewBox="590 240 160 60"><rect x="669" y="247.5" width="72.5" height="19.5" fill="none" stroke="#f5393d" stroke-width="1.8"/><line x1="669" y1="257.3" x2="609" y2="281.6" stroke="#f5393d" stroke-width="1.6"/><path d="M601.8 284.6 L610.7 274.8 L610 281.2 L615.2 285.8 Z" fill="#f5393d"/></svg>
</body></html>
